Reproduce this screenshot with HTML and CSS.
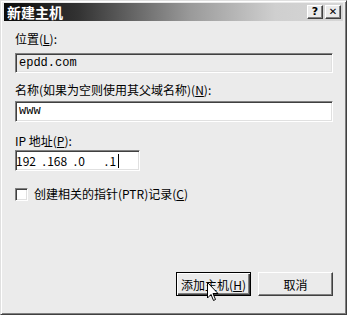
FILE: index.html
```html
<!DOCTYPE html>
<html>
  <head>
    <title>新建主机</title>
    <link rel="stylesheet" href="styles.css">
  </head>
  <body>
    <div class="window">
      <div class="titlebar">
        <span class="title">新建主机</span>
        <div class="title-buttons">
          <span class="tb-btn">?</span>
          <span class="tb-btn tb-close">✕</span>
        </div>
      </div>
      <div class="dialog">
        <label class="lbl lbl-first">位置(<u>L</u>):</label>
        <div class="field field-readonly">epdd.com</div>
        <label class="lbl lbl-name">名称(如果为空则使用其父域名称)(<u>N</u>):</label>
        <div class="field">www</div>
        <label class="lbl lbl-ip">IP 地址(<u>P</u>):</label>
        <div class="field field-ip">
          <span class="ip-seg">192</span><span class="ip-dot">.</span>
          <span class="ip-seg">168</span><span class="ip-dot">.</span>
          <span class="ip-seg">0</span><span class="ip-dot">.</span>
          <span class="ip-seg ip-last">1<span class="caret"></span></span>
        </div>
        <div class="check-row">
          <span class="checkbox"></span>
          <span>创建相关的指针(PTR)记录(<u>C</u>)</span>
        </div>
        <div class="actions">
          <div class="btn btn-default">
            <span>添加主机(<u>H</u>)</span>
            <svg class="pointer" width="12" height="20" viewBox="0 0 12 20">
              <path d="M0.5 0.5 L0.5 16 L4 12.5 L6.5 18.5 L8.5 17.5 L6 11.5 L11 11.5 Z" fill="#fff" stroke="#000" stroke-width="1"/>
            </svg>
          </div>
          <div class="btn">取消</div>
        </div>
      </div>
    </div>
  </body>
</html>
```

FILE: styles.css
```css
html,
body {
  margin: 0;
  padding: 0;
  width: 347px;
  height: 315px;
  overflow: hidden;
}
body {
  font-family: "Noto Sans CJK SC", "DejaVu Sans", sans-serif;
  font-size: 12px;
  color: #000;
  background: #ebebeb;
}
.window {
  width: 347px;
  height: 315px;
  box-sizing: border-box;
  display: flex;
  flex-direction: column;
  background: #ebebeb;
  border-top: 1px solid #e0e0e0;
  border-left: 1px solid #e0e0e0;
  border-right: 1px solid #404040;
  border-bottom: 1px solid #404040;
  box-shadow: inset 1px 1px 0 #fff, inset -1px -1px 0 #808080;
  padding: 2px 3px 3px 3px;
}
.titlebar {
  height: 18px;
  flex-shrink: 0;
  display: flex;
  align-items: center;
  justify-content: space-between;
  background: linear-gradient(to right, #0a0a0a 0%, #333 22%, #9a9a9a 55%, #cfcfcf 80%, #d6d6d6 100%);
  padding: 0 2px 0 3px;
}
.title {
  color: #fff;
  font-weight: bold;
  font-size: 14px;
  line-height: 18px;
}
.title-buttons {
  display: flex;
  gap: 2px;
}
.tb-btn {
  width: 16px;
  height: 14px;
  box-sizing: border-box;
  background: #ebebeb;
  border-top: 1px solid #fff;
  border-left: 1px solid #fff;
  border-right: 1px solid #404040;
  border-bottom: 1px solid #404040;
  box-shadow: inset -1px -1px 0 #808080;
  font-family: "DejaVu Sans", sans-serif;
  font-weight: bold;
  font-size: 11px;
  line-height: 12px;
  text-align: center;
}
.tb-close {
  font-size: 10px;
}
.dialog {
  flex: 1;
  display: flex;
  flex-direction: column;
  padding: 0 10px 15px 11px;
}
.lbl {
  display: block;
  line-height: 16px;
  height: 16px;
}
.lbl-first {
  margin-top: 10px;
  margin-bottom: 6px;
}
.lbl-name {
  margin-top: 9px;
  margin-bottom: 3px;
}
.lbl-ip {
  margin-top: 11px;
  margin-bottom: 1px;
}
.field {
  height: 21px;
  box-sizing: border-box;
  background: #fff;
  border-top: 1px solid #808080;
  border-left: 1px solid #808080;
  border-right: 1px solid #fff;
  border-bottom: 1px solid #fff;
  box-shadow: inset 1px 1px 0 #404040, inset -1px -1px 0 #e0e0e0;
  padding: 0 3px;
  font-family: "Liberation Mono", "DejaVu Sans Mono", monospace;
  font-size: 12px;
  line-height: 19px;
  width: 318px;
}
.field-readonly {
  background: #ebebeb;
  height: 20px;
}
.field-ip {
  width: 125px;
  display: flex;
  padding-left: 0;
  font-family: "Noto Sans CJK SC", "DejaVu Sans", sans-serif;
  white-space: nowrap;
}
.ip-seg {
  width: 28px;
}
.ip-dot {
  width: 5px;
}
.ip-last {
  display: flex;
  align-items: center;
}
.caret {
  display: inline-block;
  width: 1px;
  height: 14px;
  background: #000;
  margin-left: 2px;
}
.check-row {
  display: flex;
  align-items: center;
  gap: 6px;
  margin-top: 15px;
  line-height: 16px;
}
.checkbox {
  width: 13px;
  height: 13px;
  box-sizing: border-box;
  background: #fff;
  border-top: 1px solid #808080;
  border-left: 1px solid #808080;
  border-right: 1px solid #fff;
  border-bottom: 1px solid #fff;
  box-shadow: inset 1px 1px 0 #404040, inset -1px -1px 0 #e0e0e0;
}
.actions {
  margin-top: auto;
  display: flex;
  justify-content: flex-end;
  gap: 7px;
}
.btn {
  position: relative;
  width: 75px;
  height: 24px;
  box-sizing: border-box;
  display: flex;
  align-items: center;
  justify-content: center;
  background: #ebebeb;
  border-top: 1px solid #fff;
  border-left: 1px solid #fff;
  border-right: 1px solid #404040;
  border-bottom: 1px solid #404040;
  box-shadow: inset -1px -1px 0 #808080;
}
.btn-default {
  border: 1px solid #000;
  box-shadow: inset 1px 1px 0 #fff, inset -1px -1px 0 #404040, inset -2px -2px 0 #808080;
}
.pointer {
  position: absolute;
  left: 30px;
  top: 9px;
}
```
